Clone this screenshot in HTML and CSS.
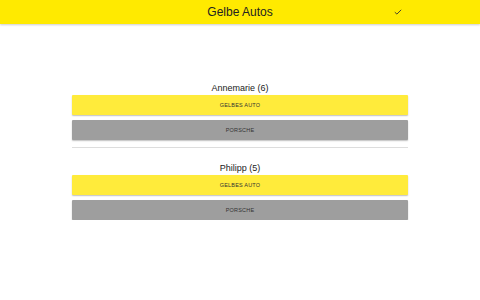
FILE: index.html
```html
<!DOCTYPE html>
<html>
<head>
  <link rel="stylesheet" href="styles.css">
  <title>Gelbe Autos</title>
</head>
<body>
  <header class="toolbar">
    <h1>Gelbe Autos</h1>
    <svg class="check" width="8" height="6" viewBox="0 0 8 6">
      <path d="M0.8 3.2 L2.9 5.1 L7.2 0.8" fill="none" stroke="#333" stroke-width="0.9"/>
    </svg>
  </header>

  <div class="container">
    <div class="player">
      <p class="name">Annemarie (6)</p>
      <button class="btn yellow">Gelbes Auto</button>
      <button class="btn gray">Porsche</button>
    </div>
    <hr>
    <div class="player">
      <p class="name">Philipp (5)</p>
      <button class="btn yellow">Gelbes Auto</button>
      <button class="btn gray">Porsche</button>
    </div>
  </div>
</body>
</html>
```

FILE: styles.css
```css
body {
  margin: 0;
  font-family: "Liberation Sans", Arial, sans-serif;
  background-color: #fff;
  color: #222;
}

.toolbar {
  position: relative;
  height: 24px;
  background-color: #ffea00;
  box-shadow: 0 1px 2px rgba(0, 0, 0, 0.2);
  display: flex;
  align-items: center;
  justify-content: center;
}

.toolbar h1 {
  margin: 0;
  font-size: 12px;
  font-weight: normal;
  color: #222;
}

.check {
  position: absolute;
  left: 394px;
  top: 9px;
}

.container {
  width: 336px;
  margin: 57px auto 0;
}

.player {
  display: flex;
  flex-direction: column;
  gap: 5px;
}

.name {
  margin: 0 0 -5px;
  height: 14px;
  line-height: 14px;
  text-align: center;
  font-size: 9px;
  color: #222;
}

.btn {
  height: 20px;
  border: none;
  border-radius: 1px;
  font-family: "Liberation Sans", Arial, sans-serif;
  font-size: 5.5px;
  text-transform: uppercase;
  letter-spacing: 0.2px;
  color: #333;
  box-shadow: 0 1px 1.5px rgba(0, 0, 0, 0.25);
  padding: 0;
}

.yellow {
  background-color: #ffeb3b;
}

.gray {
  background-color: #9e9e9e;
}

hr {
  border: none;
  border-top: 1px solid #ddd;
  margin: 7px 0 13px;
}
```
